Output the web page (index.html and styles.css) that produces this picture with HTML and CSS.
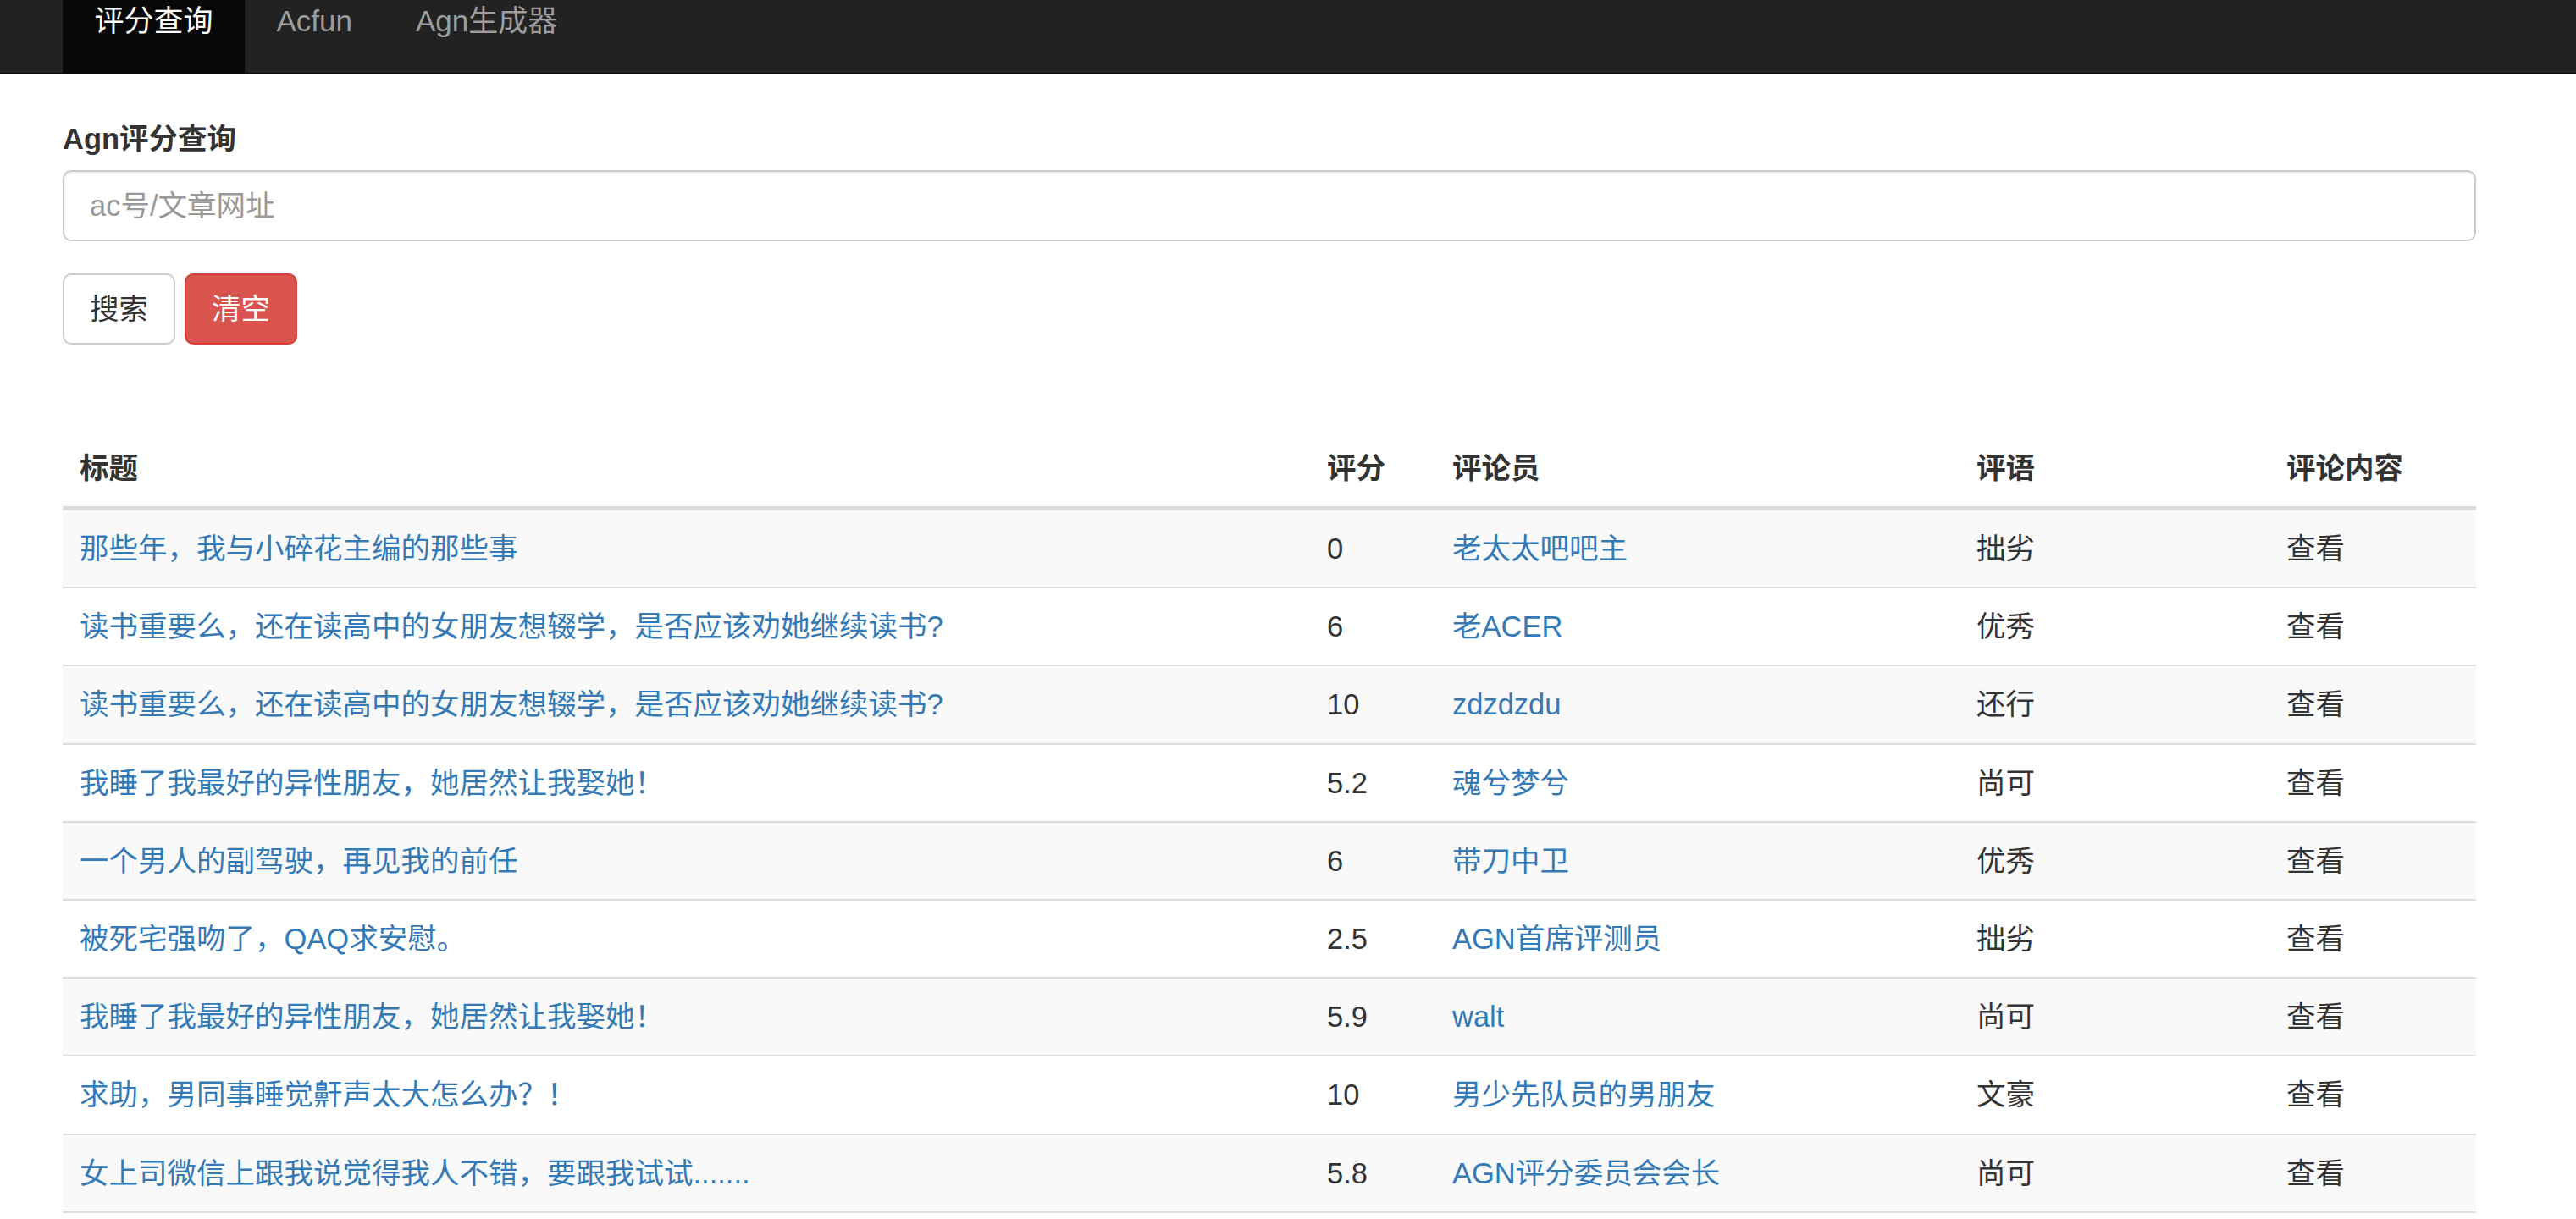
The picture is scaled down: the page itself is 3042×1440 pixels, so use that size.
FILE: index.html
```html
<!DOCTYPE html>
<html lang="zh-CN">
<head>
<meta charset="utf-8">
<title>Agn评分查询</title>
<link rel="stylesheet" href="styles.css">
</head>
<body>
<nav class="navbar">
  <ul class="nav">
    <li class="nav-item active"><a href="#">评分查询</a></li>
    <li class="nav-item"><a href="#">Acfun</a></li>
    <li class="nav-item"><a href="#">Agn生成器</a></li>
  </ul>
</nav>
<main class="page">
  <form class="search">
    <div class="form-group">
      <label class="label" for="q">Agn评分查询</label>
      <input class="input" id="q" type="text" placeholder="ac号/文章网址">
    </div>
    <div class="actions">
      <button type="button" class="btn">搜索</button>
      <button type="button" class="btn btn-danger">清空</button>
    </div>
  </form>
  <table class="table">
    <colgroup>
      <col class="c-title"><col class="c-score"><col class="c-user"><col class="c-word"><col class="c-view">
    </colgroup>
    <thead>
      <tr><th>标题</th><th>评分</th><th>评论员</th><th>评语</th><th>评论内容</th></tr>
    </thead>
    <tbody>
      <tr><td><a href="#">那些年，我与小碎花主编的那些事</a></td><td>0</td><td><a href="#">老太太吧吧主</a></td><td>拙劣</td><td>查看</td></tr>
      <tr><td><a href="#">读书重要么，还在读高中的女朋友想辍学，是否应该劝她继续读书?</a></td><td>6</td><td><a href="#">老ACER</a></td><td>优秀</td><td>查看</td></tr>
      <tr><td><a href="#">读书重要么，还在读高中的女朋友想辍学，是否应该劝她继续读书?</a></td><td>10</td><td><a href="#">zdzdzdu</a></td><td>还行</td><td>查看</td></tr>
      <tr><td><a href="#">我睡了我最好的异性朋友，她居然让我娶她！</a></td><td>5.2</td><td><a href="#">魂兮梦兮</a></td><td>尚可</td><td>查看</td></tr>
      <tr><td><a href="#">一个男人的副驾驶，再见我的前任</a></td><td>6</td><td><a href="#">带刀中卫</a></td><td>优秀</td><td>查看</td></tr>
      <tr><td><a href="#">被死宅强吻了，QAQ求安慰。</a></td><td>2.5</td><td><a href="#">AGN首席评测员</a></td><td>拙劣</td><td>查看</td></tr>
      <tr><td><a href="#">我睡了我最好的异性朋友，她居然让我娶她！</a></td><td>5.9</td><td><a href="#">walt</a></td><td>尚可</td><td>查看</td></tr>
      <tr><td><a href="#">求助，男同事睡觉鼾声太大怎么办？！</a></td><td>10</td><td><a href="#">男少先队员的男朋友</a></td><td>文豪</td><td>查看</td></tr>
      <tr><td><a href="#">女上司微信上跟我说觉得我人不错，要跟我试试.......</a></td><td>5.8</td><td><a href="#">AGN评分委员会会长</a></td><td>尚可</td><td>查看</td></tr>
    </tbody>
  </table>
</main>
</body>
</html>
```

FILE: styles.css
```css
* { box-sizing: border-box; }

html, body {
  margin: 0;
  padding: 0;
  background: #fff;
}

body {
  font-family: "Liberation Sans", "Noto Sans CJK SC", sans-serif;
  font-size: 34.5px;
  line-height: 49px;
  color: #333;
  overflow: hidden;
}

.navbar {
  background: #222;
  border-bottom: 2px solid #080808;
  height: 88px;
  padding-left: 74px;
}

.nav {
  list-style: none;
  margin: 0;
  padding: 0;
  display: flex;
  height: 86px;
}

.nav-item a {
  display: block;
  height: 86px;
  padding: 0 37.5px;
  font-size: 35px;
  line-height: 49px;
  color: #9d9d9d;
  text-decoration: none;
}

.nav-item.active a {
  background: #080808;
  color: #fff;
}

.page {
  padding: 52px 118px 0 74px;
}

.form-group {
  margin-bottom: 38px;
}

.label {
  display: block;
  font-weight: bold;
  margin-bottom: 12px;
}

.input {
  display: block;
  width: 100%;
  height: 84px;
  padding: 0 30px;
  font: inherit;
  color: #555;
  border: 2px solid #cbcbcb;
  border-radius: 10px;
  box-shadow: inset 0 2px 2px rgba(0, 0, 0, 0.075);
  outline: none;
}

.input::placeholder {
  color: #999;
}

.actions {
  display: flex;
  gap: 11px;
}

.btn {
  height: 84px;
  padding: 0 30px;
  font: inherit;
  color: #333;
  background: #fff;
  border: 2px solid #ccc;
  border-radius: 10px;
}

.btn-danger {
  color: #fff;
  background: #d9534f;
  border-color: #d43f3a;
}

.table {
  margin-top: 102px;
  width: 100%;
  table-layout: fixed;
  border-collapse: separate;
  border-spacing: 0;
}

.c-title { width: 1473px; }
.c-score { width: 148px; }
.c-user { width: 619px; }
.c-word { width: 366px; }
.c-view { width: 244px; }

.table th,
.table td {
  text-align: left;
  padding: 20px 20px;
  vertical-align: top;
  white-space: nowrap;
}

.table th {
  font-weight: bold;
  line-height: 49px;
  border-bottom: 5px solid #ddd;
}

.table td {
  line-height: 50.2px;
  border-top: 2px solid #ddd;
}

.table tbody tr:first-child td {
  border-top: 0;
}

.table tbody tr:last-child td {
  border-bottom: 2px solid #ddd;
}

.table tbody tr:nth-child(odd) td {
  background: #f9f9f9;
}

.table a {
  color: #337ab7;
  text-decoration: none;
}
```
